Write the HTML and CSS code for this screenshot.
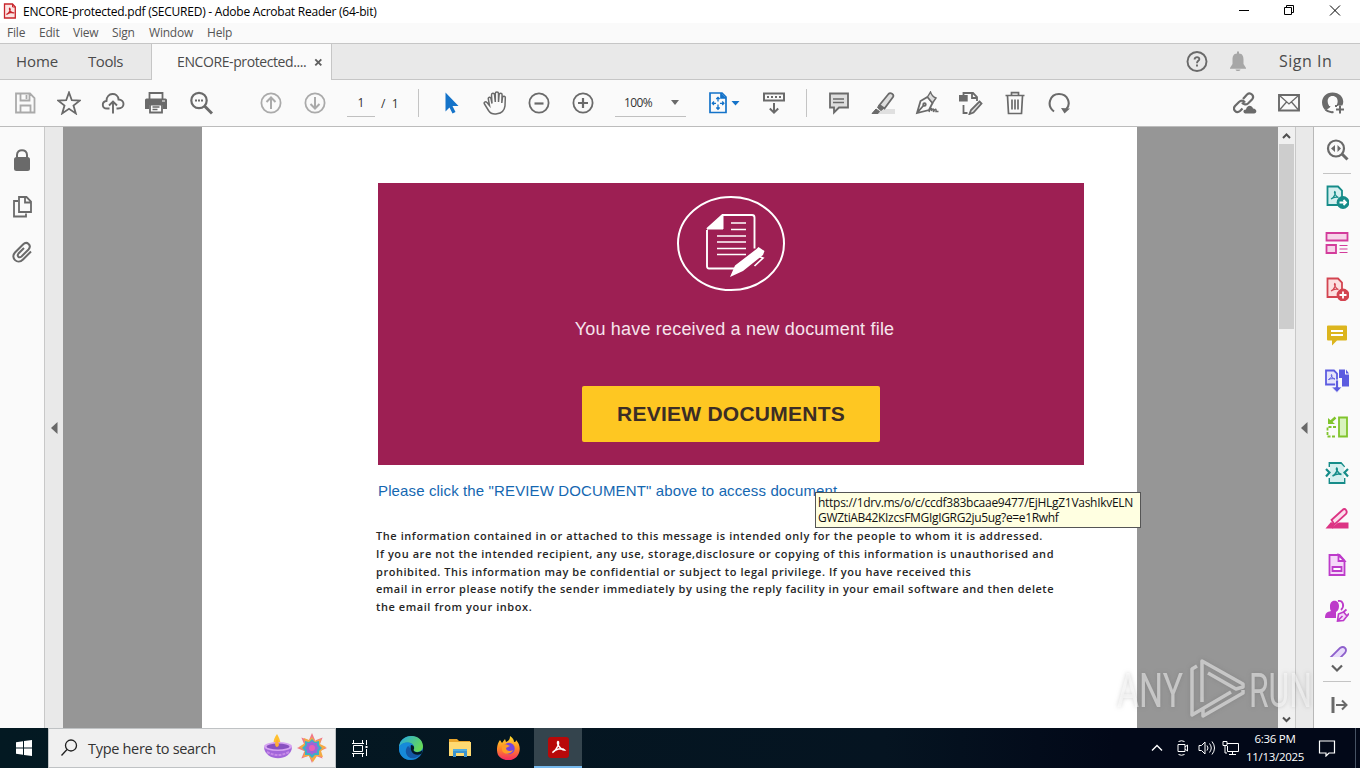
FILE: index.html
```html
<!DOCTYPE html>
<html lang="en">
<head>
<meta charset="utf-8">
<title>ENCORE-protected.pdf (SECURED) - Adobe Acrobat Reader (64-bit)</title>
<link rel="stylesheet" href="styles.css">
</head>
<body>
<div class="screen">
  <header class="titlebar">
    <svg class="app-icon" width="14" height="16" viewBox="0 0 14 16"><path d="M1.500 1h8L12.300 4v11H1.500z" fill="#fbe4e3" stroke="#c8242b" stroke-width="1.300"/><path d="M9.500 1v3h3" fill="none" stroke="#c8242b"/><path d="M3.500 11.500c3-1 4.500-5.500 3.300-6.300-1.200 0 .5 5.400 3.700 4.600-1.500-1-5-.2-7 1.700z" fill="none" stroke="#c8242b" stroke-width="1.200"/></svg>
    <span class="app-title">ENCORE-protected.pdf (SECURED) - Adobe Acrobat Reader (64-bit)</span>
    <div class="window-controls">
      <svg width="46" height="22" viewBox="0 0 46 22"><path d="M18 10.500h10" stroke="#000"/></svg>
      <svg width="46" height="22" viewBox="0 0 46 22" fill="none" stroke="#000"><path d="M17.500 7.500h7v7h-7zM19.500 7.500v-2h7v7h-2"/></svg>
      <svg width="46" height="22" viewBox="0 0 46 22"><path d="M17 5.500l10 10M27 5.500l-10 10" stroke="#000"/></svg>
    </div>
  </header>
  <nav class="menubar">
    <span class="m-file">File</span><span class="m-edit">Edit</span><span class="m-view">View</span><span class="m-sign">Sign</span><span class="m-window">Window</span><span class="m-help">Help</span>
  </nav>
  <div class="tabs">
    <span class="tab-home">Home</span><span class="tab-tools">Tools</span>
    <div class="tab-doc"><span class="doc-name">ENCORE-protected....</span><svg width="9" height="9" viewBox="0 0 9 9"><path d="M1.300 1.300l6 6M7.300 1.300l-6 6" stroke="#606060" stroke-width="1.900"/></svg></div>
    <div class="tabs-right">
      <svg class="help" width="24" height="24" viewBox="0 0 24 24"><circle cx="12" cy="11.500" r="9.500" fill="none" stroke="#6a6a6a" stroke-width="1.900"/><path d="M9.600 9.500c0-3.300 5-3 4.700-.2-.2 1.500-2.300 1.700-2.300 3.900M12 14.500v2" fill="none" stroke="#6a6a6a" stroke-width="1.900"/></svg>
      <svg width="20" height="22" viewBox="0 0 20 22" fill="#a7a7a7"><path d="M9 .5h2v2c3.500 0 4.500 3 4.500 6V13l2.500 4v.7H2V17l2.500-4V8.500c0-3 1-6 4.500-6zM7.500 18.500h5c-.5 2-4.500 2-5 0z"/></svg>
      <span class="signin">Sign In</span>
    </div>
  </div>
  <div class="toolbar">
    <div class="group g-file">
      <svg class="icon dim" viewBox="0 0 24 24"><path d="M3 2.500h14l4.500 4.500v14.500H3zM7.500 2.500v7h9v-7M13.500 4v4M7.500 21.500v-7h10v7"/></svg>
      <svg class="icon" viewBox="0 0 24 24"><path d="M12 1.500l2.800 7.700 8.200.3-6.500 5 2.300 7.900-6.800-4.600-6.800 4.600 2.300-7.900-6.500-5 8.200-.3z"/></svg>
      <svg class="icon" viewBox="0 0 24 24"><path d="M8.500 17.500H6c-5.500 0-5.500-7-.5-7.500C5.500 1 17 1 17.500 8.500c6.500 0 7 9-.5 9h-1.500M12 22.500V11M8 14.500l4-4 4 4" stroke-width="1.900"/></svg>
      <svg class="icon" viewBox="0 0 24 24"><path d="M4.500 8V2h13v6" /><path d="M1.500 7.500h19a1.500 1.500 0 0 1 1.500 1.500v9h-4v-4H4v4H0V9a1.500 1.500 0 0 1 1.500-1.500z" fill="#6a6a6a" stroke="none"/><path d="M5 13.500h12v8H5z" fill="#fff"/><path d="M7.500 16h7M7.500 18.500h5" stroke-width="1.300"/><path d="M17 10h3" stroke="#fff" stroke-width="1"/></svg>
      <svg class="icon" viewBox="0 0 24 24"><circle cx="10" cy="9.500" r="7.700" stroke-width="2.200"/><path d="M15.500 15l7.500 7.500" stroke-width="3"/><path d="M6 9.500h2M9 9.500h2M12 9.500h2" stroke-width="2"/></svg>
    </div>
    <div class="group g-nav">
      <svg class="icon dim" viewBox="0 0 24 24"><circle cx="12" cy="12" r="9.600"/><path d="M12 18V7M7.500 11L12 6.500l4.500 4.500" stroke-width="2"/></svg>
      <svg class="icon dim" viewBox="0 0 24 24"><circle cx="12" cy="12" r="9.600"/><path d="M12 6v11M7.500 13l4.500 4.500 4.500-4.500" stroke-width="2"/></svg>
    </div>
    <span class="page-input">1</span><span class="page-total">/&nbsp; 1</span>
    <i class="divider"></i>
    <div class="group g-view">
      <svg class="icon" viewBox="0 0 24 24"><path d="M6.500 1.500v19l4-4 3 6 3-1.500-3-6h6z" fill="#1473c9" stroke="none"/></svg>
      <svg class="icon" viewBox="0 0 24 24"><path d="M6.500 14.500L4 11.500c-1.700-1.500-3.500 0-2.500 1.500l4 6.500c2 3 5 4 8.500 3.300 5-.8 7.500-4 8-8L22.300 7c.3-2-2.300-2.500-2.800-.8L18.800 12l.3-8.300c0-2-2.900-2-3 0L15.500 11V2.500c0-2-3.200-2-3.200 0V11L11.500 3.500C11 1.700 8.500 2 8.500 4L9 12.500 8 7.500C7.500 5.500 5 6 5.300 8l1.200 6.500z" stroke-width="1.500"/></svg>
      <svg class="icon" viewBox="0 0 24 24"><circle cx="12" cy="12" r="9.600"/><path d="M7.500 12.500h9" stroke-width="2.200"/></svg>
      <svg class="icon" viewBox="0 0 24 24"><circle cx="12" cy="12" r="9.600"/><path d="M7 12h10M12 7v10" stroke-width="2.200"/></svg>
    </div>
    <div class="zoom-box"><span>100%</span><svg width="8" height="5" viewBox="0 0 8 5"><path d="M0 0h8L4 5z" fill="#6a6a6a"/></svg></div>
    <svg class="fit" width="32" height="24" viewBox="0 0 32 24" fill="none" stroke="#1473c9" stroke-width="1.700"><path d="M2 2h12l4 4v15.500H2z"/><path d="M13 2v5h5" fill="#1473c9"/><path d="M10 6.500v4M10 13.500v4.500M4.500 12.300H8M12 12.300h4M8.300 8L10 6.300 11.700 8M8.300 16.500L10 18.300l1.700-1.800M6 10.500l-1.700 1.800L6 14M14.200 10.500l1.700 1.800-1.700 1.700" stroke-width="1.300"/><path d="M23.500 10h8l-4 4.500z" fill="#1473c9" stroke="none"/></svg>
    <svg class="icon page-mode" viewBox="0 0 24 24"><path d="M2 2.500h20v7H2z" stroke-width="2"/><path d="M5 6h2M9 6h2M13 6h2M17 6h2" stroke-width="2"/><path d="M12 12v9.500M7.800 17.500L12 21.700l4.200-4.200" stroke-width="2"/></svg>
    <i class="divider second"></i>
    <div class="group g-edit">
      <svg class="icon" viewBox="0 0 24 24"><path d="M3 2.500h18v14h-9l-5 5v-5H3z" fill="#dedede" stroke-width="1.800"/><path d="M6 8h11M6 11.500h11" stroke-width="1.400"/></svg>
      <svg class="icon" viewBox="0 0 24 24"><path d="M7 18h17v5H7z" fill="#e0e0e0" stroke="none"/><path d="M8.500 14L17.500 3c2-2 6 .5 4.500 3L13.500 17.500z" fill="#ddd"/><path d="M8 14l4.500 3.500L10 19.500l-3.500-3zM5 18l3.500 2.500L7 22.500H1z" fill="#6a6a6a" stroke-width="1"/></svg>
      <svg class="icon" viewBox="0 0 24 24"><path d="M2 22L5.500 10l7-4 5 6-3.500 7zM2 22l6.500-7.500"/><path d="M12.500 6l3-5c1 3 3 5 5.500 6l-3.500 5z" fill="#ddd" stroke-width="1.400"/><circle cx="9.500" cy="13.500" r="1.300"/><path d="M14 21c1-4 3-5 2.500-1 1-2.500 2.500-3 2 1 1.500-3.500 3-3.500 2.500-.5h2.500" stroke-width="1.500"/></svg>
      <svg class="icon" viewBox="0 0 24 24"><path d="M.8 5h7v4.500h-7z" fill="#6a6a6a"/><path d="M4.500 4V2H14l4 4v4M13 2v5h5M4.500 14v8h4"/><path d="M20.500 10.500l2 2-8 9-4 1.500 1.500-4z" fill="#ddd"/></svg>
      <svg class="icon" viewBox="0 0 24 24"><path d="M2.500 4.500h19M8.500 4V1.700h7V4M4.500 5l1 17.500h13l1-17.500M9 8.500v10M12 8.500v10M15 8.500v10" stroke-width="1.700"/></svg>
      <svg class="icon" viewBox="0 0 24 24"><path d="M7 20.500C-1 14.500 3 3 12 3c9 0 12.500 10 7 15.500" stroke-width="2.100"/><path d="M14 17l9 .5-5.500 5z" fill="#6a6a6a" stroke="none"/></svg>
    </div>
    <div class="group g-share">
      <svg class="icon" viewBox="0 0 24 24"><path d="M10 8l4-4.500c3.500-3 8 1.500 5 5l-4 4c-2.500 2-5 .5-6-1M12 11.500c-1.500-2.500-4-2.500-6-.5l-4 4c-3 3.500 1.500 8 5 5L9.500 17.500" stroke-width="2.200"/><path d="M13.500 22.500c-4 0-4-4-.5-4 1-5 6-4.500 7-1 4 0 4.500 5 1 5z" fill="#6a6a6a" stroke="none"/></svg>
      <svg class="icon" viewBox="0 0 24 24"><path d="M2 4h20v15.500H2z" stroke-width="1.900"/><path d="M2.500 4.500L12 13l9.500-8.500M2.500 19l7-8M21.500 19l-7-8" stroke-width="1.300"/></svg>
      <svg class="icon" viewBox="0 0 24 24"><path d="M6 21C-3 14 1 1.500 11.500 1.500c9 0 13 8 9.500 13.500h-6c3-4 2-10-3.500-10-5 0-6 6-3.500 9.500V17l-4 1.500z" fill="#6a6a6a" stroke="none"/><path d="M4 18c2-1.500 4.500-1.500 4.500-3M4.500 18.500c2 2 5 3 8 2.500M15 14v2" stroke-width="2"/><path d="M15 18.500h8M19 14.500v8" stroke="#fafafa" stroke-width="4"/><path d="M15 18.500h8M19 14.500v8" stroke-width="2"/></svg>
    </div>
  </div>
  <main class="workspace">
    <aside class="left-rail">
      <svg width="20" height="24" viewBox="0 0 20 24"><path d="M5 11V7c0-6.500 10-6.500 10 0v4" fill="none" stroke="#6a6a6a" stroke-width="2"/><rect x="2" y="9" width="16" height="14" rx="2.500" fill="#6a6a6a"/></svg>
      <svg width="22" height="24" viewBox="0 0 22 24" fill="none" stroke="#6a6a6a" stroke-width="1.800"><path d="M8 2h7.500l4.500 4.500V17H8zM14 2v5.500h6M7 6H3v15.500h12v-3"/></svg>
      <svg class="clip" width="22" height="24" viewBox="0 0 22 24" fill="none" stroke="#6a6a6a" stroke-width="2"><path d="M20 11.500l-8 8c-5.500 5.500-13-1.500-8-7l8-8c4-4 9 1 5.500 5l-7 7c-2.500 2-5-.5-3-3l5.500-5.500"/></svg>
    </aside>
    <div class="gutter gutter-left"><svg width="7" height="12" viewBox="0 0 7 12"><path d="M6.500 0v12L0 6z" fill="#696969"/></svg></div>
    <div class="viewer">
      <article class="page">
        <section class="banner">
          <svg class="doc-art" width="110" height="96" viewBox="0 0 110 96"><ellipse cx="55" cy="48.500" rx="53" ry="46.500" fill="none" stroke="#fff" stroke-width="2"/><g fill="none" stroke="#fff"><path d="M31 35v36q0 2.500 2 2.500h26M31 34l15.500-14H76q2.500 0 2.500 2.500v31" stroke-width="1.900"/><path d="M31 34l16-14v14z" fill="#fff"/><path d="M55 28h15M55 34.500h15M41 41h29M41 47h29M41 53.500h29M41 59.500h29" stroke-width="1.500"/></g><path d="M54 82l5-11.500L80.500 54l2-2 6 4-1.500 4-20 16z" fill="#fff"/><path d="M83 61.500l4 1.500-8.500 8" fill="none" stroke="#fff" stroke-width="1.700"/></svg>
          <p class="received">You have received a new document file</p>
          <div class="review"><span>REVIEW DOCUMENTS</span></div>
        </section>
        <p class="access">Please click the "REVIEW DOCUMENT" above to access document</p>
        <div class="notice">
          <span class="n1">The information contained in or attached to this message is intended only for the people to whom it is addressed.</span>
          <span class="n2">If you are not the intended recipient, any use, storage,disclosure or copying of this information is unauthorised and</span>
          <span class="n3">prohibited. This information may be confidential or subject to legal privilege. If you have received this</span>
          <span class="n4">email in error please notify the sender immediately by using the reply facility in your email software and then delete</span>
          <span class="n5">the email from your inbox.</span>
        </div>
      </article>
      <div class="tooltip"><span class="t1">https://1drv.ms/o/c/ccdf383bcaae9477/EjHLgZ1VashIkvELN</span><span class="t2">GWZtiAB42KIzcsFMGIgIGRG2ju5ug?e=e1Rwhf</span></div>
    </div>
    <div class="scrollbar">
      <svg width="16" height="17" viewBox="0 0 16 17"><path d="M4 11l3.500-3.500L11 11" fill="none" stroke="#505050" stroke-width="2"/></svg>
      <i class="thumb"></i>
      <svg class="down" width="16" height="17" viewBox="0 0 16 17"><path d="M4 6.500L7.500 10 11 6.500" fill="none" stroke="#505050" stroke-width="2"/></svg>
    </div>
    <div class="gutter gutter-right"><svg width="7" height="12" viewBox="0 0 7 12"><path d="M6.500 0v12L0 6z" fill="#696969"/></svg></div>
    <aside class="right-rail">
      <div class="cell"><svg class="icon" viewBox="0 0 24 24"><circle cx="11" cy="10.500" r="8" stroke-width="2.200"/><path d="M17 16l5.500 5.500" stroke-width="3"/><path d="M10 7v7L6 10.500zM12.500 7v7l3.500-3.500z" fill="#6a6a6a" stroke="none"/></svg></div>
      <i class="rule"></i>
      <div class="cell"><svg class="icon teal" viewBox="0 0 24 24"><path d="M2.500 1.500h10.500l4 4V20H2.500z" fill="#d5efef"/><path d="M6 14c4-2 5-7 3.700-7.500-1 1 1 5 3.800 6-2.500-.8-5-.3-7.500 1.500" stroke-width="1.200"/><circle cx="18" cy="17.500" r="5.500" fill="#168c89"/><path d="M14.500 17.500H21M18.500 15l2.500 2.500-2.500 2.500" stroke="#fff"/></svg></div>
      <div class="cell"><svg class="icon pink" viewBox="0 0 24 24"><path d="M1.500 2h21v7.500h-21zM1.500 14h9.500v8H1.500z" fill="#f7d4e9"/><path d="M14.500 14.500h8M14.500 18h8M14.500 21.500h8" stroke-width="1"/></svg></div>
      <div class="cell"><svg class="icon red" viewBox="0 0 24 24"><path d="M2.500 1.500h10.500l4 4V20H2.500z" fill="#fce0e0"/><path d="M6 14c4-2 5-7 3.700-7.500-1 1 1 5 3.800 6-2.500-.8-5-.3-7.500 1.500" stroke-width="1.200"/><circle cx="18" cy="18" r="5.500" fill="#d34450"/><path d="M14.500 18h7M18 14.500v7" stroke="#fff"/></svg></div>
      <div class="cell"><svg class="icon" viewBox="0 0 24 24"><path d="M3 2.500h18q1 0 1 1v13q0 1-1 1h-9l-5 5v-5H3q-1 0-1-1v-13q0-1 1-1z" fill="#dcb51e" stroke="none"/><path d="M6 8h12M6 12h12" stroke="#fff"/></svg></div>
      <div class="cell"><svg class="icon blue" viewBox="0 0 24 24"><path d="M11 15.500H1V1.500h8l3 3V12" fill="#e6e5fb"/><path d="M3.500 10.500c3-1 4-4.500 3-5-1 .5 1 4 3.500 4.500-2-.5-4-.5-6.500.5" stroke-width="1"/><path d="M14 .5h6v5h4v12h-7V9h-3zM21 .5l3 4h-3z" fill="#5c5ce0" stroke="none"/><path d="M10.500 11h3v7h3.500L12 23.500 6.500 18h4z" fill="#5c5ce0" stroke="#fafafa" stroke-width=".8"/></svg></div>
      <div class="cell"><svg class="icon green" viewBox="0 0 24 24"><path d="M14 2.500h8v19h-8z" fill="#d9f3be"/><path d="M11 12H2.500v9.500H11" stroke-dasharray="3 1.500"/><path d="M10.500 2.500L5.500 7" stroke-width="2.500"/><path d="M3 3v6h7z" fill="#80c42c" stroke="none"/></svg></div>
      <div class="cell"><svg class="icon teal" viewBox="0 0 24 24"><path d="M4.500 6V2h11.500l3.500 4M4.500 17v5h15v-5" /><path d="M5 3h11l3 3v15H5z" fill="#d5efef" stroke="none"/><path d="M7.500 15c4-2 5.500-7 4.300-8-1.200 1 1.200 5.500 4.700 6.500-3-.8-6-.4-9 1.500" stroke-width="1.500"/><path d="M1 8l3.500 3.500L1 15.500M23 8l-3.500 3.500 3.500 4" stroke-width="2.200"/></svg></div>
      <div class="cell"><svg class="icon rose" viewBox="0 0 24 24"><path d="M7 21.500c4-5 6-6 8-6h8.500v6H7z" fill="#dc3484" stroke="none"/><path d="M6.500 13L17.500 3q2-2 3.500 0t0 4L9.500 17.500z" fill="#fbe0ed"/><path d="M6 15l-5.500 6.500H8l2-4z" fill="#dc3484" stroke="none"/></svg></div>
      <div class="cell"><svg class="icon violet" viewBox="0 0 24 24"><path d="M4.500 2h10l5 5.500V22h-15z" fill="#f5d8f9"/><path d="M13.500 2v6h6zM7.500 14h9v4h-9z" fill="#fff"/></svg></div>
      <div class="cell"><svg class="icon violet" viewBox="0 0 24 24"><path d="M5 7c0-7 9-7 9 0 0 3-1 5-3 6v6H0c0-5 2-6 6-7-1-1-1-3-1-5z" fill="#bd3bca" stroke="none"/><path d="M13 2c5-1 7 5 3 9" /><path d="M12.500 22l1-7 5-2 3.500 4-3.500 4.500zM12.500 22l5-5" fill="#f5d8f9" stroke-width="1.600"/><path d="M18.500 13l3-2.500M22 17l2-2.500"/></svg></div>
      <div class="peek"><svg class="icon purple" viewBox="0 0 24 24"><path d="M5 14L15 4q3-2 5 0t0 5l-9 9-7 2z" fill="#e8dcfb"/></svg></div>
      <svg class="more" width="14" height="10" viewBox="0 0 14 10"><path d="M2 2.500l5 5 5-5" fill="none" stroke="#606060" stroke-width="2.200"/></svg>
      <i class="rule last"></i>
      <svg class="icon collapse" viewBox="0 0 24 24"><path d="M6 4v16" stroke-width="3"/><path d="M9 12h10M15 7.500l4.500 4.500-4.500 4.500" stroke-width="2"/></svg>
    </aside>
  </main>
  <footer class="taskbar">
    <div class="start"><svg width="16" height="16" viewBox="0 0 16 16" fill="#fff"><path d="M0 2.200l7-1v6.300H0zM8 1l8-1v7.500H8zM0 8.500h7v6.300l-7-1zM8 8.500h8V16l-8-1z"/></svg></div>
    <div class="search">
      <svg width="18" height="18" viewBox="0 0 18 18" fill="none" stroke="#202020" stroke-width="1.300"><circle cx="10" cy="6.500" r="5.500"/><path d="M6 10.500L.5 16.500"/></svg>
      <span class="search-text">Type here to search</span>
      <svg class="diya" width="30" height="28" viewBox="0 0 30 28"><path d="M14 0c-5 7-4 11 0 13 5-1 4-6 0-13z" fill="#ffc02e"/><path d="M14 6q-3 6 0 7 3-2 0-7z" fill="#ff7430"/><path d="M1 13c1 15 27 15 28 0z" fill="#a266da"/><ellipse cx="15" cy="12.500" rx="14" ry="4.500" fill="#d6a4f1"/><ellipse cx="15" cy="12.500" rx="11.500" ry="3" fill="#8850c0"/><path d="M4 18q11 6 22 0" fill="none" stroke="#c78be8" stroke-width="2" stroke-dasharray="3 1"/><path d="M14 5c-3 4-2 8 0 8 3-1 2-4 0-8z" fill="#ffad35"/></svg>
      <svg class="flower" width="30" height="30" viewBox="-15 -15 30 30"><g fill="#f17786"><path id="petal" d="M-3-8L0-15 3-8 0 0z"/><use href="#petal" transform="rotate(45)"/><use href="#petal" transform="rotate(90)"/><use href="#petal" transform="rotate(135)"/><use href="#petal" transform="rotate(180)"/><use href="#petal" transform="rotate(225)"/><use href="#petal" transform="rotate(270)"/><use href="#petal" transform="rotate(315)"/></g><g fill="#f3aa42"><use href="#leaf" transform="rotate(22)"/><path d="M0-11l3 4 6-2-1 5 6 3-5 4 2 6-6-1-4 6-4-6-6 1 2-6-6-4 6-4-1-5 5 2z"/></g><path d="M0-9l3 3 4-1v4l3 3-3 3v4H3L0 10l-3-3h-4V3l-3-3 3-3v-4l4 1z" fill="#3dafc6"/><path d="M0-7l2 2h3v3l2 2-2 2v3H2L0 7l-2-2h-3V2l-2-2 2-2v-3h3z" fill="#9b66d7"/><circle r="3" fill="#e85fb5"/></svg>
    </div>
    <div class="task first"><svg width="18" height="18" viewBox="0 0 18 18" fill="none" stroke="#fff"><path d="M2.500 1v3.500h9V1M2.500 6.500h9v6h-9zM2.500 18v-3.500h9V18M15.500 1v5M15.500 10v7M1 4.500h12M1 14.500h12"/><path d="M14.500 7h2v2h-2z" fill="#fff" stroke="none"/></svg></div>
    <div class="task edge"><svg width="24" height="24" viewBox="0 0 24 24"><defs><linearGradient id="edgeGreen" x2="1" y2=".5"><stop stop-color="#24a7e8"/><stop offset="1" stop-color="#65d857"/></linearGradient></defs><circle cx="12" cy="12" r="12" fill="#1677cc"/><path d="M0 11C1-3 23-4 24 10c0 6-6 7-9 5-2-1 0-2 0-4 0-5-10-7-15 0z" fill="url(#edgeGreen)"/><path d="M0 11c4-6 11-5 14-2-3-1-6 1-6 5 0 7 7 8 13 5-7 9-22 5-21-8z" fill="#168ad9"/><path d="M9 10c-5 5-1 14 7 12 3-1 5-3 6-5-4 2-9 1-10-4z" fill="#1557a5"/><path d="M12 9c3 0 4 3 2.500 5 1 3 6 3 9 0l-1 4c-8 3-12-3-10.500-9z" fill="#031925"/></svg></div>
    <div class="task"><svg width="22" height="20" viewBox="0 0 22 20"><path d="M0 1h8l2 2h11v15H0z" fill="#e9a52b"/><path d="M0 4h22v14H0z" fill="#ffda72"/><path d="M4 11h14v8h-3v-4H7v4H4z" fill="#3c94ce"/><path d="M4 11h14v2H4z" fill="#52addf"/></svg></div>
    <div class="task"><svg width="24" height="24" viewBox="0 0 24 24"><defs><linearGradient id="fox" y2="1" x2="0"><stop stop-color="#ffe02e"/><stop offset=".5" stop-color="#ff8a25"/><stop offset="1" stop-color="#f52865"/></linearGradient></defs><path d="M3 4l2 3 3-4 1 3c3-1 4-3 4-6 3 2 4 4 4 6 2 0 2-1 2-2 4 4 5 10 2 15-5 8-16 6-20 0-2-5-1-11 2-15z" fill="url(#fox)"/><circle cx="12" cy="12.500" r="5.700" fill="#7545df"/><path d="M5 9c4-2 6 0 8 1l-4 2c0 3 4 4 7 2-2 5-10 5-11 0z" fill="#ff9d25"/></svg></div>
    <div class="task active"><svg width="21" height="21" viewBox="0 0 21 21"><rect width="21" height="21" rx="3" fill="#b80909"/><path d="M4.500 15.500C9 13 12 5 10 4.500 8 5.500 12 13 16.500 13 14 10.500 7 12 4.500 15.500z" fill="none" stroke="#fff" stroke-width="1.500"/></svg></div>
    <div class="tray">
      <svg width="12" height="8" viewBox="0 0 12 8"><path d="M1 6.500L6 1.500l5 5" fill="none" stroke="#fff" stroke-width="1.400"/></svg>
      <svg class="camera" width="14" height="16" viewBox="0 0 14 16" fill="none" stroke="#fff"><path d="M3 4.500h7v7H3zM10 7l2.500-2v6L10 9M3.500 1.500q3-1.500 6 0M3.500 14.500q3 1.500 6 0"/></svg>
      <svg class="sound" width="18" height="16" viewBox="0 0 18 16" fill="none" stroke="#fff"><path d="M1 5.500h2.500L7 2v12l-3.500-3.500H1zM9 5.500q2 2.500 0 5M11.500 3.500q3.500 4.500 0 9M14 1.500q5 6.500 0 13"/></svg>
      <svg class="network" width="18" height="16" viewBox="0 0 18 16" fill="none" stroke="#fff"><path d="M5 3.500h11.500v8h-11V6M10.500 12v2.500M7 14.500h7M1 1.500h4v4H1zM3 5.500V13h2"/></svg>
      <div class="clock"><span class="time">6:36 PM</span><span class="date">11/13/2025</span></div>
      <svg class="action" width="18" height="18" viewBox="0 0 18 18"><path d="M1.500 2h15v12H11l-3 3v-3H1.500z" fill="none" stroke="#fff" stroke-width="1.200"/></svg>
      <i class="peek-line"></i>
    </div>
  </footer>
  <svg class="watermark" width="220" height="80" viewBox="0 0 220 80"><g class="mark"><text x="3" y="52" textLength="66" lengthAdjust="spacingAndGlyphs">ANY</text><text x="135" y="52" textLength="63" lengthAdjust="spacingAndGlyphs">RUN</text><path d="M83 11l-5 3v46l39-23M88 47V6l41 23v3l-7 2-28-16M89 54v7l40-23v-3"/></g></svg>
</div>
</body>
</html>
```
FILE: styles.css
```css
* { box-sizing: border-box; }
body { margin: 0; overflow: hidden; font-family: "Open Sans", "Noto Sans", sans-serif; }
svg { display: block; flex: none; }
p { margin: 0; }
span { white-space: nowrap; }
.screen { position: relative; width: 1360px; height: 768px; display: flex; flex-direction: column; background: #fafafa; }
.titlebar { height: 23px; display: flex; align-items: center; padding-left: 3px; background: #fff; }
.app-icon { margin-top: -2px; }
.app-title { margin-left: 6px; font-size: 12px; letter-spacing: -.235px; line-height: 22px; color: #000; }
.window-controls { display: flex; margin-left: auto; align-self: flex-start; padding-right: 1px; }
.menubar { height: 21px; display: flex; padding-left: 7px; border-bottom: 1px solid #c6c6c6; font-size: 12px; line-height: 20px; letter-spacing: -.2px; color: #555; }
.m-file { width: 32px; }
.m-edit { width: 34px; }
.m-view { width: 39px; }
.m-sign { width: 37px; }
.m-window { width: 58px; }
.tabs { height: 36px; display: flex; background: #e9e9e9; border-bottom: 1px solid #c6c6c6; color: #4b4b4b; font-size: 15px; line-height: 35px; }
.tab-home { width: 88px; padding-left: 16px; letter-spacing: -.1px; }
.tab-tools { width: 63px; letter-spacing: -.45px; }
.tab-doc { width: 181px; height: 36px; display: flex; align-items: center; gap: 7px; padding-left: 25px; background: #fafafa; border-left: 1px solid #c6c6c6; border-right: 1px solid #c6c6c6; font-size: 14px; }
.doc-name { width: 130px; letter-spacing: -.4px; line-height: 34px; margin-top: -1px; }
.tabs-right { margin-left: auto; display: flex; align-items: center; }
.help { margin-right: 19px; }
.signin { width: 81px; margin-left: 31px; font-size: 16px; letter-spacing: .5px; font-weight: 500; }
.toolbar { height: 47px; display: flex; align-items: center; padding: 0 5px 0 3px; border-bottom: 1px solid #bcbcbc; color: #333; }
.group { display: flex; }
.icon { width: 24px; height: 24px; fill: none; stroke: #6a6a6a; stroke-width: 1.8; }
.group .icon { margin: 0 10px; }
.icon.dim { stroke: #aaa; }
.g-nav { margin-left: 26px; }
.page-input { width: 28px; height: 27px; margin: 0 6px 0 10px; border-bottom: 1px solid #c0c0c0; text-align: center; font-size: 12px; line-height: 25px; }
.page-total { width: 37px; font-size: 12px; }
.divider { width: 1px; height: 28px; background: #c4c4c4; }
.g-view { margin-left: 10px; }
.zoom-box { width: 71px; height: 27px; margin-left: 10px; display: flex; align-items: center; justify-content: space-between; padding: 0 7px 0 9px; border-bottom: 1px solid #c0c0c0; font-size: 12px; letter-spacing: -.6px; }
.fit { margin-left: 22px; }
.page-mode { margin-left: 22px; }
.second { margin-left: 20px; }
.g-edit { margin-left: 10px; }
.g-share { margin-left: auto; }
.workspace { height: 601px; display: flex; }
.left-rail { width: 45px; padding-top: 21px; display: flex; flex-direction: column; align-items: center; gap: 23px; border-right: 1px solid #c8c8c8; }
.left-rail svg { margin-left: 0; }
.left-rail .clip { margin-left: -1px; margin-top: -2px; }
.gutter { display: flex; align-items: center; background: #e9e9e9; }
.gutter-left { width: 18px; padding-left: 6px; }
.gutter-right { width: 19px; padding-left: 5px; border-left: 1px solid #c8c8c8; border-right: 1px solid #b8b8b8; }
.viewer { position: relative; width: 1215px; padding-left: 139px; background: #969696; }
.page { width: 935px; height: 601px; padding: 56px 0 0 174px; background: #fff; }
.banner { width: 706px; height: 282px; margin-left: 2px; padding-top: 12px; display: flex; flex-direction: column; align-items: center; background: #9d1f53; }
.received { margin: 28px 0 0 7px; color: #f6e4ec; font: 18px/21px "Liberation Sans", sans-serif; letter-spacing: .19px; white-space: nowrap; }
.review { width: 298px; height: 56px; margin-top: 46px; border-radius: 2px; background: #fec722; text-align: center; color: #3c2d25; font: bold 21px/55px "Liberation Sans", sans-serif; letter-spacing: .25px; }
.access { margin: 16px 0 0 2px; color: #1467b1; font: 15px/20px "Liberation Sans", sans-serif; letter-spacing: .13px; }
.notice { margin-top: 26px; display: flex; flex-direction: column; color: #262626; font-size: 11px; font-weight: 600; line-height: 17.75px; letter-spacing: .57px; }
.notice span { align-self: flex-start; }
.n1 { letter-spacing: .57px; }
.n3 { letter-spacing: .55px; }
.n4 { letter-spacing: .52px; }
.tooltip { position: absolute; left: 752px; top: 365px; width: 326px; height: 36px; padding: 2px; display: flex; flex-direction: column; background: #ffffe1; border: 1px solid #555; font-size: 12px; line-height: 15px; color: #111; }
.tooltip span { align-self: flex-start; }
.t1 { letter-spacing: -.28px; }
.t2 { letter-spacing: -.33px; }
.scrollbar { width: 17px; display: flex; flex-direction: column; padding-left: 1px; background: #f0f0f0; }
.thumb { width: 15px; height: 185px; background: #cdcdcd; }
.down { margin-top: auto; }
.right-rail { width: 46px; display: flex; flex-direction: column; align-items: center; }
.cell { height: 46px; display: flex; align-items: center; }
.rule { width: 28px; height: 1px; background: #c4c4c4; }
.icon.teal { stroke: #168c89; }
.icon.pink { stroke: #d33c9b; }
.icon.red { stroke: #d34450; }
.icon.blue { stroke: #5c5ce0; }
.icon.green { stroke: #80c42c; }
.icon.rose { stroke: #dc3484; }
.icon.violet { stroke: #bd3bca; }
.icon.purple { stroke: #8e60cc; }
.peek { height: 23px; padding-top: 10px; overflow: hidden; }
.more { margin-top: 6px; }
.last { margin-top: 8px; }
.collapse { margin: 11px 0 0 4px; }
.taskbar { height: 40px; display: flex; background: linear-gradient(90deg, #031922, #051421 65%, #020818 82%); }
.start { width: 48px; display: flex; align-items: center; justify-content: center; }
.search { width: 288px; display: flex; align-items: center; padding-left: 12px; background: #f0f0f0; border: 1px solid #bfc2c4; color: #333; }
.search-text { width: 170px; margin-left: 9px; font-size: 14.5px; letter-spacing: -.3px; }
.diya { margin-left: 5px; }
.flower { margin-left: 4px; }
.task { width: 48px; margin-left: 1px; display: flex; align-items: center; justify-content: center; }
.task.first { margin-left: 0; }
.task.edge { margin-left: 3px; }
.task.active { background: #34444d; border-bottom: 2px solid #76b9ed; }
.tray { margin-left: auto; display: flex; align-items: center; color: #fff; }
.camera { margin-left: 12px; }
.sound { margin-left: 9px; }
.network { margin-left: 6px; }
.clock { width: 70px; margin-left: 0; display: flex; flex-direction: column; align-items: center; font-size: 11.5px; line-height: 18px; letter-spacing: -.3px; }
.action { margin-left: 8px; }
.peek-line { width: 1px; height: 40px; margin: 0 4px 0 19px; background: #465263; }
.watermark { position: absolute; left: 1114px; top: 655px; overflow: visible; }
.mark { fill: none; stroke: rgba(255,255,255,.5); stroke-width: 3.5; stroke-linejoin: round; filter: drop-shadow(0 0 2px rgba(90,90,90,.5)); }
.mark text { fill: rgba(255,255,255,.5); stroke: none; font: 400 49px Roboto, sans-serif; }
```
